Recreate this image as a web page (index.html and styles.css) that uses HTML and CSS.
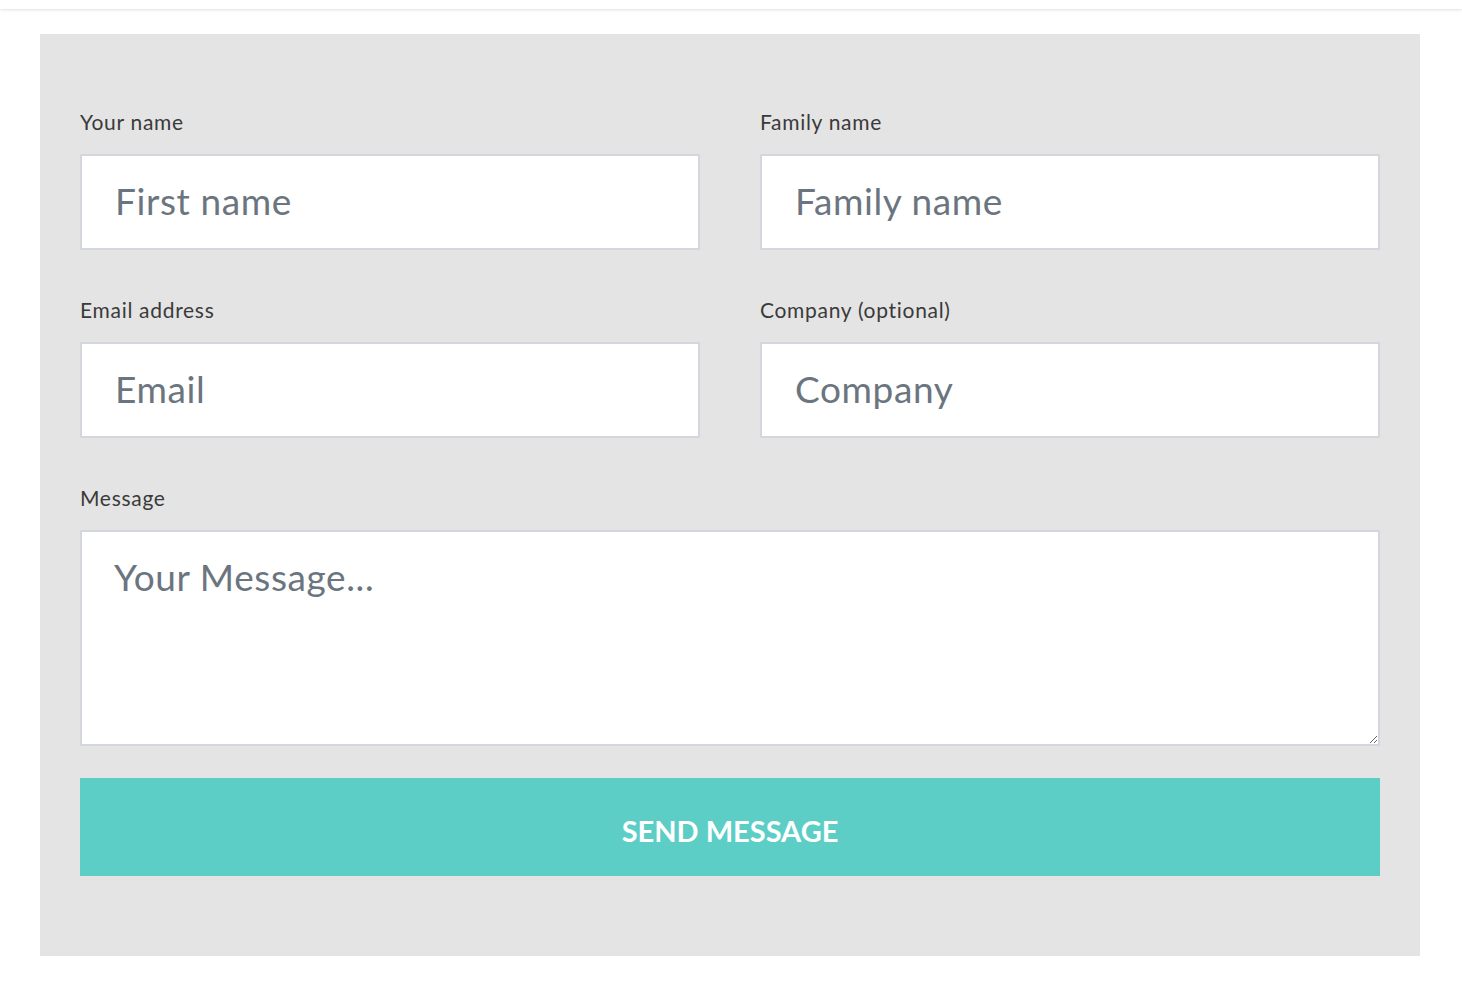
FILE: index.html
```html
<!DOCTYPE html>
<html lang="en">
<head>
<meta charset="utf-8">
<title>Contact form</title>
<link rel="stylesheet" href="styles.css">
</head>
<body>
<header class="topbar"></header>
<main class="page">
  <form class="panel">
    <div class="row">
      <div class="field">
        <label class="label" for="fn">Your name</label>
        <input class="input" id="fn" type="text" placeholder="First name">
      </div>
      <div class="field">
        <label class="label" for="ln">Family name</label>
        <input class="input" id="ln" type="text" placeholder="Family name">
      </div>
    </div>
    <div class="row">
      <div class="field">
        <label class="label" for="em">Email address</label>
        <input class="input" id="em" type="email" placeholder="Email">
      </div>
      <div class="field">
        <label class="label" for="co">Company (optional)</label>
        <input class="input" id="co" type="text" placeholder="Company">
      </div>
    </div>
    <div class="field">
      <label class="label" for="msg">Message</label>
      <textarea class="input textarea" id="msg" placeholder="Your Message..."></textarea>
    </div>
    <button class="send" type="button">SEND MESSAGE</button>
  </form>
</main>
</body>
</html>
```
FILE: styles.css
```css
* { box-sizing: border-box; }
html, body { margin: 0; padding: 0; background: #fff; }
body { font-family: Lato, "Open Sans", sans-serif; }

.topbar {
  height: 9px;
  background: #fff;
  box-shadow: 0 1px 3px rgba(0,0,0,0.12);
  position: relative;
}

.page { padding: 25px 42px 0 40px; }

.panel {
  width: 1380px;
  background: #e4e4e4;
  padding: 76px 40px 80px 40px;
  display: flex;
  flex-direction: column;
}

.row {
  display: grid;
  grid-template-columns: 620px 620px;
  column-gap: 60px;
  margin-bottom: 48px;
}

.field { display: flex; flex-direction: column; }

.label {
  font-size: 21px;
  line-height: 24px;
  letter-spacing: 0.7px;
  color: #3a3a3a;
  margin-bottom: 20px;
}

.input {
  height: 96px;
  border: 2px solid #d3d7dd;
  background: #fff;
  padding: 0 33px 3px 33px;
  font-family: inherit;
  font-size: 37px;
  letter-spacing: 0.6px;
  color: #4a545e;
  outline: none;
  border-radius: 0;
}
.input::placeholder { color: #6b7580; opacity: 1; }

.textarea {
  height: 216px;
  padding: 18px 32px;
  line-height: 54px;
  resize: vertical;
}

.send {
  margin-top: 32px;
  height: 98px;
  padding: 6px 0 0 0;
  border: none;
  background: #5ccec5;
  color: #fff;
  font-family: inherit;
  font-weight: 700;
  font-size: 29px;
  letter-spacing: 0;
  cursor: pointer;
}
```
